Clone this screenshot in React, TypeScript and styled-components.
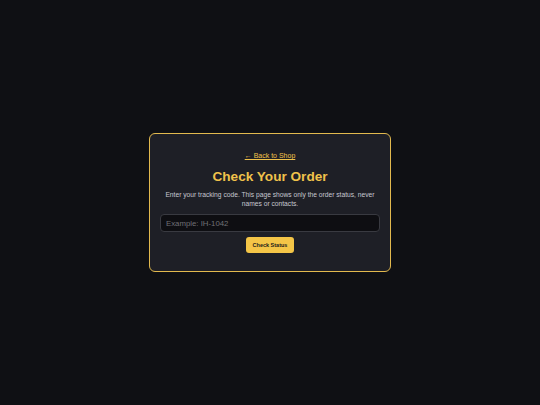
import React from "react";
import styled, { createGlobalStyle } from "styled-components";

const Global = createGlobalStyle`
  html, body { margin: 0; padding: 0; background: #0f1014; }
  body { font-family: "Liberation Sans", Arial, sans-serif; }
  * { box-sizing: border-box; }
`;

const Page = styled.main`
  min-height: 405px;
  display: flex;
  align-items: center;
  justify-content: center;
  background: #0f1014;
`;

const Card = styled.section`
  width: 242px;
  padding: 17px 10px 18px;
  background: #1e1f26;
  border: 1px solid #e2b94e;
  border-radius: 6px;
  display: flex;
  flex-direction: column;
  align-items: center;
  text-align: center;
`;

const BackLink = styled.a`
  color: #f0c24b;
  font-size: 7px;
  line-height: 9px;
  text-decoration: underline;
  cursor: pointer;
`;

const Title = styled.h1`
  margin: 8px 0 0;
  color: #f0c24b;
  font-size: 13.6px;
  line-height: 17px;
  font-weight: 700;
`;

const Lead = styled.p`
  margin: 6px 0 0;
  color: #c6c7d0;
  font-size: 6.7px;
  line-height: 8.5px;
`;

const Input = styled.input`
  margin-top: 6px;
  width: 100%;
  height: 18px;
  padding: 0 5px;
  background: #0e0e12;
  border: 1px solid #393a41;
  border-radius: 4px;
  color: #e0e0e0;
  font-family: inherit;
  font-size: 7.8px;
  outline: none;
  &::placeholder { color: #707076; }
`;

const Button = styled.button`
  margin-top: 5px;
  width: 48px;
  height: 16px;
  padding: 0;
  background: #f4c547;
  border: none;
  border-radius: 3px;
  color: #1b1b1b;
  font-family: inherit;
  font-size: 5.5px;
  font-weight: 700;
  cursor: pointer;
`;

export default function App() {
  return (
    <>
      <Global />
      <Page>
        <Card>
          <BackLink>← Back to Shop</BackLink>
          <Title>Check Your Order</Title>
          <Lead>
            Enter your tracking code. This page shows only the order status, never
            <br />
            names or contacts.
          </Lead>
          <Input placeholder="Example: IH-1042" />
          <Button>Check Status</Button>
        </Card>
      </Page>
    </>
  );
}
